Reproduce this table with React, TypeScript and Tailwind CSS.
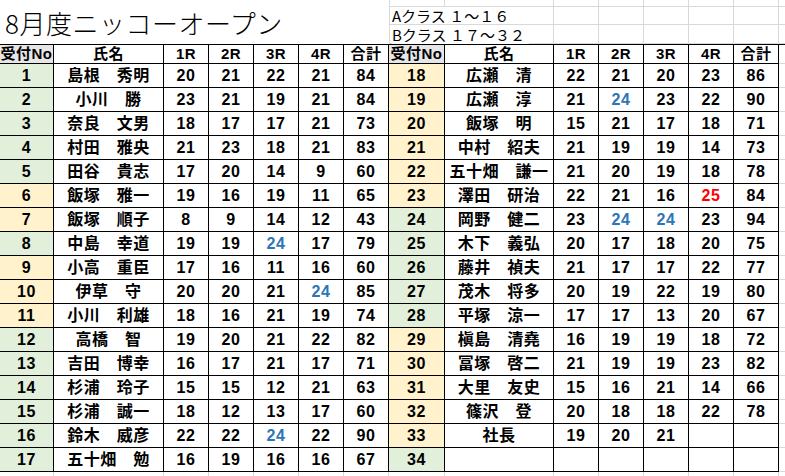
import React from "react"

// one row of score data: [no, name, 1R, 2R, 3R, 4R, total]
type Score = string | number
type Row = [number, string, Score, Score, Score, Score, Score]

const left: Row[] = [
  [1, "島根　秀明", 20, 21, 22, 21, 84],
  [2, "小川　勝", 23, 21, 19, 21, 84],
  [3, "奈良　文男", 18, 17, 17, 21, 73],
  [4, "村田　雅央", 21, 23, 18, 21, 83],
  [5, "田谷　貴志", 17, 20, 14, 9, 60],
  [6, "飯塚　雅一", 19, 16, 19, 11, 65],
  [7, "飯塚　順子", 8, 9, 14, 12, 43],
  [8, "中島　幸道", 19, 19, 24, 17, 79],
  [9, "小高　重臣", 17, 16, 11, 16, 60],
  [10, "伊草　守", 20, 20, 21, 24, 85],
  [11, "小川　利雄", 18, 16, 21, 19, 74],
  [12, "高橋　智", 19, 20, 21, 22, 82],
  [13, "吉田　博幸", 16, 17, 21, 17, 71],
  [14, "杉浦　玲子", 15, 15, 12, 21, 63],
  [15, "杉浦　誠一", 18, 12, 13, 17, 60],
  [16, "鈴木　威彦", 22, 22, 24, 22, 90],
  [17, "五十畑　勉", 16, 19, 16, 16, 67],
]

const right: Row[] = [
  [18, "広瀬　清", 22, 21, 20, 23, 86],
  [19, "広瀬　淳", 21, 24, 23, 22, 90],
  [20, "飯塚　明", 15, 21, 17, 18, 71],
  [21, "中村　紹夫", 21, 19, 19, 14, 73],
  [22, "五十畑　謙一", 21, 20, 19, 18, 78],
  [23, "澤田　研治", 22, 21, 16, 25, 84],
  [24, "岡野　健二", 23, 24, 24, 23, 94],
  [25, "木下　義弘", 20, 17, 18, 20, 75],
  [26, "藤井　禎夫", 21, 17, 17, 22, 77],
  [27, "茂木　将多", 20, 19, 22, 19, 80],
  [28, "平塚　涼一", 17, 17, 13, 20, 67],
  [29, "槇島　清堯", 16, 19, 19, 18, 72],
  [30, "冨塚　啓二", 21, 19, 19, 23, 82],
  [31, "大里　友史", 15, 16, 21, 14, 66],
  [32, "篠沢　登", 20, 18, 18, 22, 78],
  [33, "社長", 19, 20, 21, "", ""],
  [34, "", "", "", "", "", ""],
]

// orange fill of the 受付No cells, the rest are green
const orange = new Set([6, 7, 9, 10, 11, 18, 19, 20, 21, 22, 23, 29, 30, 31, 32, 33])

// coloured scores: "no-col" -> colour class
const marks: Record<string, string> = {
  "8-4": "text-[#2e75b6]",
  "10-5": "text-[#2e75b6]",
  "16-4": "text-[#2e75b6]",
  "19-3": "text-[#2e75b6]",
  "24-3": "text-[#2e75b6]",
  "24-4": "text-[#2e75b6]",
  "23-5": "text-[#ff0000]",
}

const heads = ["受付No", "氏名", "1R", "2R", "3R", "4R", "合計"]

const cell = "flex items-center justify-center border-r border-b border-black"

function Cells({ row }: { row: Row }) {
  const no = row[0]
  return (
    <>
      <div className={`${cell} ${orange.has(no) ? "bg-[#fff2cc]" : "bg-[#e2efda]"}`}>{no}</div>
      <div className={cell}>{row[1]}</div>
      {row.slice(2).map((v, i) => (
        <div key={i} className={`${cell} ${marks[`${no}-${i + 2}`] ?? ""}`}>
          {v}
        </div>
      ))}
    </>
  )
}

export default function App() {
  return (
    <div className="w-[785px] h-[476px] overflow-hidden bg-white text-black font-['Liberation_Sans','Noto_Sans_CJK_JP',sans-serif]">
      {/* title and class notes */}
      <div className="flex h-[44px]">
        <div className="w-[389px] flex items-center pl-[5px] pt-[1px]">
          <h1 className="text-[26px] font-light leading-none tracking-[0.5px] font-['Noto_Sans_CJK_JP',sans-serif]">
            8月度ニッコーオープン
          </h1>
        </div>
        <div className="relative flex-1 grid grid-cols-[1px_55px_109px_45px_45px_45px_45px_45px_6px] grid-rows-[7px_18px_19px]">
          {Array.from({ length: 27 }).map((_, i) => (
            <div key={i} className={`border-b border-[#d9d9d9] ${i % 9 === 8 ? "" : "border-r"}`} />
          ))}
          <div className="absolute left-[3px] top-[7px] flex flex-col text-[15px] leading-none font-['Noto_Sans_CJK_JP',sans-serif]">
            <span className="h-[17px] flex items-center bg-white pr-1 w-fit">Aクラス １～１６</span>
            <span className="h-[19px] mt-[1px] flex items-center bg-white pr-1 w-fit">Bクラス １７～３２</span>
          </div>
        </div>
      </div>

      {/* score table */}
      <div className="grid grid-cols-[54px_110px_45px_45px_45px_45px_45px_56px_109px_45px_45px_45px_45px_45px_6px] grid-rows-[19px] auto-rows-[24px] border-t border-black text-[16px] font-bold tracking-[0.5px]">
        {heads.map((h, i) => (
          <div key={"l" + h} className={`${cell} text-[15px] ${i === 0 ? "bg-[#e7e6e6]" : ""}`}>{h}</div>
        ))}
        {heads.map((h, i) => (
          <div key={"r" + h} className={`${cell} text-[15px] ${i === 0 ? "bg-[#e7e6e6]" : ""}`}>{h}</div>
        ))}
        <div className="border-b border-[#d9d9d9]" />
        {left.map((row, r) => (
          <React.Fragment key={r}>
            <Cells row={row} />
            <Cells row={right[r]} />
            <div className="border-b border-[#d9d9d9]" />
          </React.Fragment>
        ))}
        {Array.from({ length: 15 }).map((_, i) => (
          <div key={"b" + i} className={i === 14 ? "" : "border-r border-[#d9d9d9] h-[5px]"} />
        ))}
      </div>
    </div>
  )
}
